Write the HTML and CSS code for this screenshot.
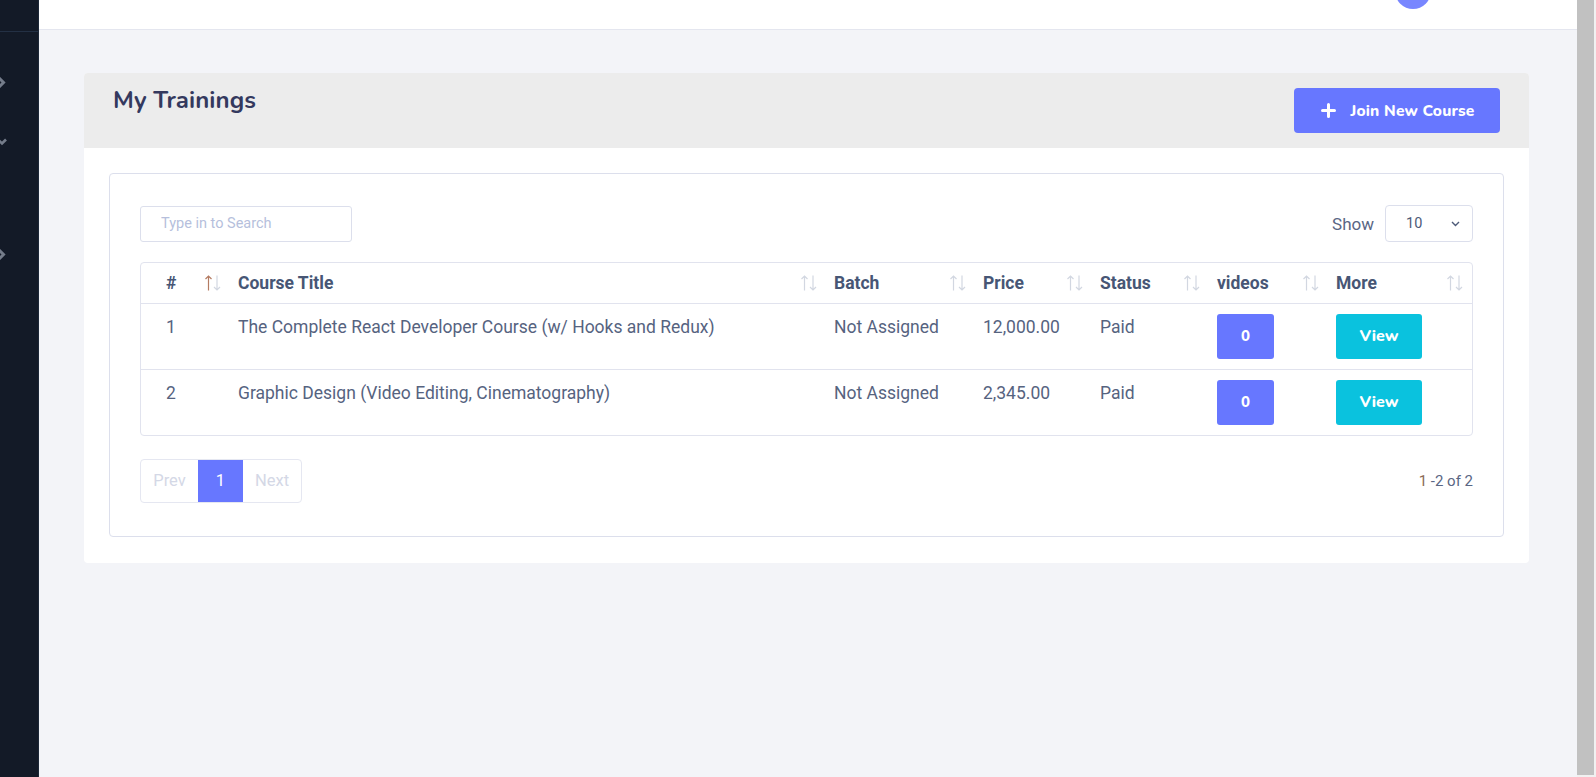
FILE: index.html
```html
<!DOCTYPE html>
<html lang="en">
<head>
<meta charset="utf-8">
<title>My Trainings</title>
<link rel="stylesheet" href="styles.css">
</head>
<body>
<div class="app">
  <aside class="sidebar">
    <div class="side-top"></div>
    <div class="side-icons">
      <svg class="side-ico ico-1" width="9" height="11" viewBox="0 0 9 11"><path d="M1 1 L5.5 5.5 L1 10" fill="none" stroke="#747c8a" stroke-width="3"/></svg>
      <svg class="side-ico ico-2" width="11" height="8" viewBox="0 0 11 8"><path d="M1 1.5 L5 5.5 L9 1.5" fill="none" stroke="#747c8a" stroke-width="2.6"/></svg>
      <svg class="side-ico ico-3" width="9" height="11" viewBox="0 0 9 11"><path d="M1 1 L5.5 5.5 L1 10" fill="none" stroke="#747c8a" stroke-width="3"/></svg>
    </div>
  </aside>
  <div class="main">
    <header class="topbar">
      <span class="avatar"></span>
    </header>
    <div class="content">
      <section class="card">
        <div class="card-head">
          <h1 class="title">My Trainings</h1>
          <button class="btn-join">
            <svg width="15" height="15" viewBox="0 0 15 15"><path d="M7.5 1.5 V13.5 M1.5 7.5 H13.5" stroke="#fff" stroke-width="3" stroke-linecap="round"/></svg>
            <span>Join New Course</span>
          </button>
        </div>
        <div class="card-body">
          <div class="panel">
            <div class="toolbar">
              <input class="search" type="text" placeholder="Type in to Search">
              <div class="show">
                <span class="show-label">Show</span>
                <div class="select">
                  <span>10</span>
                  <svg width="9" height="6" viewBox="0 0 9 6"><path d="M1 1 L4.5 4.5 L8 1" fill="none" stroke="#4d5a78" stroke-width="1.4"/></svg>
                </div>
              </div>
            </div>
            <div class="table-wrap">
              <table class="grid">
                <colgroup>
                  <col class="c1"><col class="c2"><col class="c3"><col class="c4"><col class="c5"><col class="c6"><col class="c7">
                </colgroup>
                <thead>
                  <tr>
                    <th class="first">#<svg class="sort" width="18" height="17" viewBox="0 0 18 17"><path class="up act" d="M4.5 16 V1.5 M1.5 4.5 L4.5 1.5 L7.5 4.5"/><path class="dn" d="M13 1 V15.5 M10 12.5 L13 15.5 L16 12.5"/></svg></th>
                    <th>Course Title<svg class="sort" width="18" height="17" viewBox="0 0 18 17"><path class="up" d="M4.5 16 V1.5 M1.5 4.5 L4.5 1.5 L7.5 4.5"/><path class="dn" d="M13 1 V15.5 M10 12.5 L13 15.5 L16 12.5"/></svg></th>
                    <th>Batch<svg class="sort" width="18" height="17" viewBox="0 0 18 17"><path class="up" d="M4.5 16 V1.5 M1.5 4.5 L4.5 1.5 L7.5 4.5"/><path class="dn" d="M13 1 V15.5 M10 12.5 L13 15.5 L16 12.5"/></svg></th>
                    <th>Price<svg class="sort" width="18" height="17" viewBox="0 0 18 17"><path class="up" d="M4.5 16 V1.5 M1.5 4.5 L4.5 1.5 L7.5 4.5"/><path class="dn" d="M13 1 V15.5 M10 12.5 L13 15.5 L16 12.5"/></svg></th>
                    <th>Status<svg class="sort" width="18" height="17" viewBox="0 0 18 17"><path class="up" d="M4.5 16 V1.5 M1.5 4.5 L4.5 1.5 L7.5 4.5"/><path class="dn" d="M13 1 V15.5 M10 12.5 L13 15.5 L16 12.5"/></svg></th>
                    <th>videos<svg class="sort" width="18" height="17" viewBox="0 0 18 17"><path class="up" d="M4.5 16 V1.5 M1.5 4.5 L4.5 1.5 L7.5 4.5"/><path class="dn" d="M13 1 V15.5 M10 12.5 L13 15.5 L16 12.5"/></svg></th>
                    <th>More<svg class="sort" width="18" height="17" viewBox="0 0 18 17"><path class="up" d="M4.5 16 V1.5 M1.5 4.5 L4.5 1.5 L7.5 4.5"/><path class="dn" d="M13 1 V15.5 M10 12.5 L13 15.5 L16 12.5"/></svg></th>
                  </tr>
                </thead>
                <tbody>
                  <tr>
                    <td class="first">1</td>
                    <td>The Complete React Developer Course (w/ Hooks and Redux)</td>
                    <td>Not Assigned</td>
                    <td>12,000.00</td>
                    <td>Paid</td>
                    <td><button class="btn-count">0</button></td>
                    <td><button class="btn-view">View</button></td>
                  </tr>
                  <tr>
                    <td class="first">2</td>
                    <td>Graphic Design (Video Editing, Cinematography)</td>
                    <td>Not Assigned</td>
                    <td>2,345.00</td>
                    <td>Paid</td>
                    <td><button class="btn-count">0</button></td>
                    <td><button class="btn-view">View</button></td>
                  </tr>
                </tbody>
              </table>
            </div>
            <div class="footer">
              <div class="pager">
                <span class="pg pg-prev">Prev</span>
                <span class="pg pg-cur">1</span>
                <span class="pg pg-next">Next</span>
              </div>
              <div class="count"><span class="count-first">1</span> -2 of 2</div>
            </div>
          </div>
        </div>
      </section>
    </div>
  </div>
  <div class="scrollbar"><div class="thumb"></div></div>
</div>
</body>
</html>
```

FILE: styles.css
```css
* { box-sizing: border-box; }
html, body { margin: 0; padding: 0; height: 100%; overflow: hidden; }
body { font-family: Roboto, "Liberation Sans", sans-serif; color: #526180; }

.app { display: flex; height: 777px; width: 1596px; }

.sidebar {
  width: 39px;
  flex: 0 0 39px;
  background: #131a27;
  border-right: 1px solid #1d2838;
  display: flex;
  flex-direction: column;
}
.side-top { height: 32px; border-bottom: 1px solid #233044; }
.side-icons { display: flex; flex-direction: column; padding-top: 45px; }
.side-ico { display: block; margin-left: -2px; }
.ico-2 { margin-top: 50px; margin-left: -3px; }
.ico-3 { margin-top: 103px; }

.main { flex: 1; background: #f3f4f8; display: flex; flex-direction: column; min-width: 0; }
.topbar {
  height: 30px;
  background: #fff;
  border-bottom: 1px solid #e4e6ef;
  position: relative;
}
.avatar {
  position: absolute;
  left: 1356px;
  top: -27px;
  width: 36px;
  height: 36px;
  border-radius: 50%;
  background: #7886ff;
}

.content { padding: 43px 48px 0 45px; }

.card { background: #fff; border-radius: 4px; }
.card-head {
  height: 75px;
  background: #ececec;
  border-radius: 4px 4px 0 0;
  display: flex;
  justify-content: space-between;
  align-items: flex-start;
  padding: 0 29px 0 29px;
}
.title {
  margin: 0;
  padding-top: 12px;
  font-family: "Nunito", "Open Sans", sans-serif;
  font-weight: 700;
  font-size: 24px;
  line-height: 30px;
  color: #34395e;
  letter-spacing: 0.1px;
}
.btn-join {
  margin-top: 15px;
  width: 206px;
  height: 45px;
  border: 0;
  border-radius: 4px;
  background: #6777ff;
  color: #fff;
  display: flex;
  align-items: center;
  justify-content: center;
  gap: 14px;
  padding: 0 0 0 2px;
  font-family: "Nunito", "Open Sans", sans-serif;
  font-weight: 800;
  font-size: 15.5px;
  letter-spacing: 0.2px;
}

.card-body { padding: 25px 25px 26px 25px; }
.panel {
  border: 1px solid #dcdfec;
  border-radius: 4px;
  padding: 31px 30px 33px 30px;
}
.toolbar { display: flex; justify-content: space-between; align-items: center; }
.search {
  width: 212px;
  height: 36px;
  border: 1px solid #dcdfec;
  border-radius: 3px;
  padding: 0 0 0 20px;
  font-family: Roboto, sans-serif;
  font-size: 14.5px;
  color: #526180;
  outline: none;
}
.search::placeholder { color: #b6bfdc; }
.show { display: flex; align-items: center; gap: 11px; }
.show-label { font-size: 17px; color: #5a6684; }
.select {
  width: 88px;
  height: 37px;
  border: 1px solid #dcdfec;
  border-radius: 4px;
  display: flex;
  align-items: center;
  justify-content: space-between;
  padding: 0 12px 0 20px;
  font-size: 14.5px;
  color: #4d5a78;
}

.table-wrap {
  margin-top: 20px;
  border: 1px solid #e1e3ee;
  border-radius: 4px;
  overflow: hidden;
}
.grid { width: 100%; border-collapse: collapse; table-layout: fixed; }
.c1 { width: 89px; } .c2 { width: 596px; } .c3 { width: 149px; } .c4 { width: 117px; }
.c5 { width: 117px; } .c6 { width: 119px; } .c7 { width: auto; }
.grid th {
  position: relative;
  height: 40px;
  padding: 0 8px;
  text-align: left;
  font-weight: 700;
  font-size: 17.5px;
  color: #475675;
  border-bottom: 1px solid #e1e3ee;
}
.grid th.first, .grid td.first { padding-left: 25px; }
.sort {
  position: absolute;
  right: 8px;
  top: 50%;
  transform: translateY(-50%);
  fill: none;
  stroke-width: 1.2;
}
.sort .up, .sort .dn { stroke: #d2d7e1; }
.sort .act { stroke: #b47b62; }
.grid td {
  height: 65px;
  padding: 10px 8px;
  vertical-align: top;
  font-size: 17.5px;
  line-height: 27px;
  color: #56637f;
  border-bottom: 1px solid #e1e3ee;
}
.grid tbody tr:last-child td { border-bottom: 0; }
.btn-count, .btn-view {
  height: 45px;
  border: 0;
  border-radius: 3px;
  color: #fff;
  font-family: "Nunito", "Open Sans", sans-serif;
  font-weight: 800;
  font-size: 15px;
  display: block;
}
.btn-count { width: 57px; background: #6777ff; }
.btn-view { width: 86px; background: #0ac2de; font-size: 16px; }

.footer { display: flex; justify-content: space-between; align-items: center; margin-top: 23px; }
.pager {
  display: flex;
  height: 44px;
  border: 1px solid #e5e7f1;
  border-radius: 4px;
  overflow: hidden;
}
.pg {
  display: flex;
  align-items: center;
  justify-content: center;
  font-size: 16.5px;
  color: #d4d8e6;
}
.pg-prev { width: 57px; }
.pg-cur { width: 45px; background: #6777ff; color: #fff; }
.pg-next { width: 58px; }
.count { font-size: 15px; color: #5a6684; }
.count-first { color: #8a6a55; }

.scrollbar { width: 19px; flex: 0 0 19px; background: #f1f1f1; padding-bottom: 2px; }
.thumb { width: 17px; height: 100%; background: #c1c1c1; }
```
